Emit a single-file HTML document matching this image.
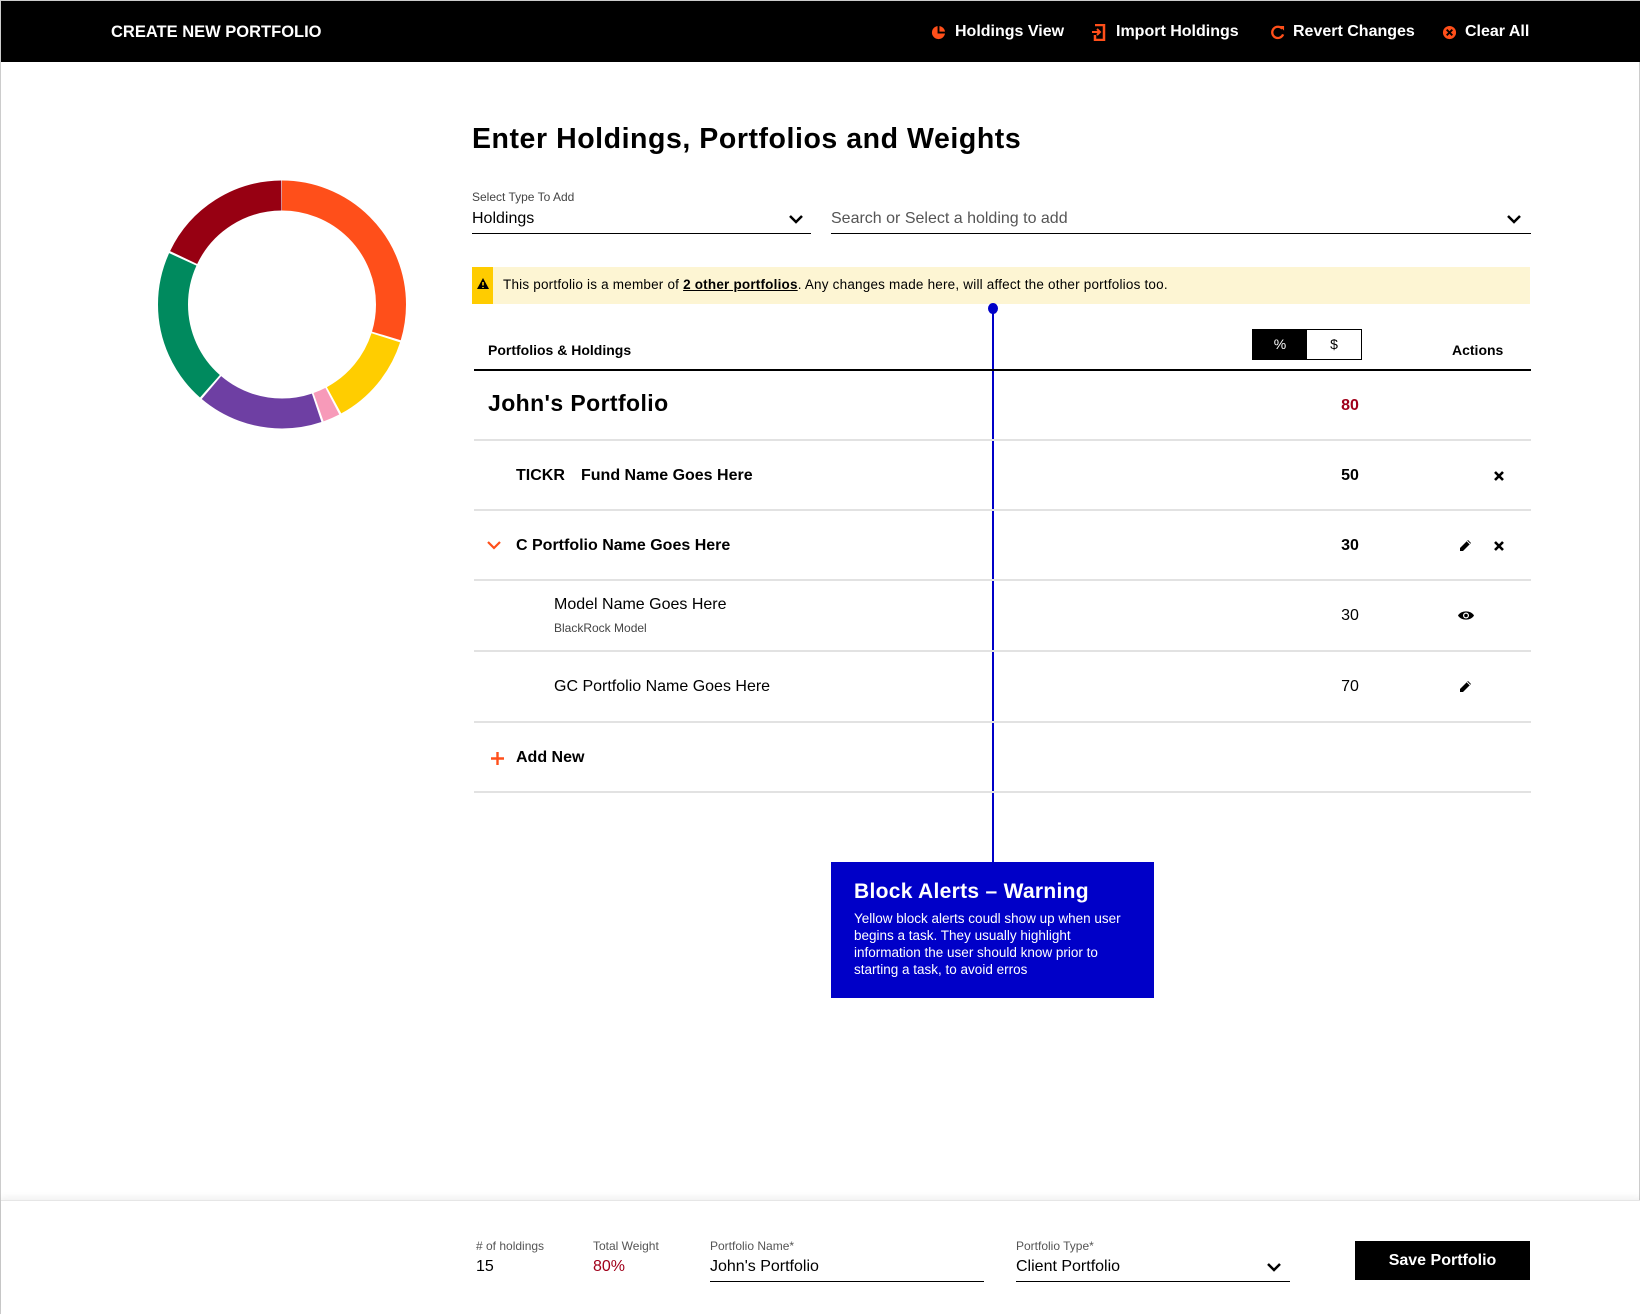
<!DOCTYPE html>
<html><head><meta charset="utf-8"><style>
*{margin:0;padding:0;box-sizing:border-box}
body{width:1640px;height:1314px;position:relative;background:#fff;font-family:"Liberation Sans",sans-serif;color:#000;overflow:hidden;border:1px solid #ccc}
.a{position:absolute;white-space:nowrap}
.hdr{position:absolute;left:0;top:0;width:1640px;height:61px;background:#000;color:#fff;font-weight:bold;font-size:16px}
.line{position:absolute;left:473px;width:1057px;height:2px;background:#e2e2e2}
.b{font-weight:bold}
.num{position:absolute;left:1309px;width:80px;text-align:center;font-size:16px}
</style></head><body>
<div class="hdr">
<div class="a" style="left:110px;top:22px;font-size:16.5px">CREATE NEW PORTFOLIO</div>
<svg class="a" style="left:930px;top:24px" width="15" height="15" viewBox="0 0 16 16"><circle cx="8" cy="8" r="7" fill="#ff4f1a"/><path d="M8 1v7h7" stroke="#000" stroke-width="2" fill="none"/></svg>
<div class="a" style="left:954px;top:22px">Holdings View</div>
<svg class="a" style="left:1091px;top:23px" width="15" height="17" viewBox="0 0 15 17"><path d="M3 1h9v15H3v-5" stroke="#ff4f1a" stroke-width="2.5" fill="none"/><path d="M0 8h7M5 5l3 3-3 3" stroke="#ff4f1a" stroke-width="2" fill="none"/></svg>
<div class="a" style="left:1115px;top:22px">Import Holdings</div>
<svg class="a" style="left:1269px;top:24px" width="15" height="15" viewBox="0 0 16 16"><path d="M13 4A6 6 0 1 0 14 10" stroke="#ff4f1a" stroke-width="2.5" fill="none"/><path d="M10 1h5v5z" fill="#ff4f1a"/></svg>
<div class="a" style="left:1292px;top:22px">Revert Changes</div>
<svg class="a" style="left:1441px;top:24px" width="15" height="15" viewBox="0 0 16 16"><circle cx="8" cy="8" r="7" fill="#ff4f1a"/><path d="M5 5l6 6M11 5l-6 6" stroke="#000" stroke-width="2"/></svg>
<div class="a" style="left:1464px;top:22px">Clear All</div>
</div>

<svg class="a" style="left:0;top:0" width="420" height="440">
<g transform="rotate(-90 281 303.5)" fill="none" stroke-width="30">
<circle cx="281" cy="303.5" r="109" stroke="#ff4f1a" stroke-dasharray="203 700" stroke-dashoffset="0"/>
<circle cx="281" cy="303.5" r="109" stroke="#ffcd00" stroke-dasharray="83 700" stroke-dashoffset="-205"/>
<circle cx="281" cy="303.5" r="109" stroke="#f79ab9" stroke-dasharray="15 700" stroke-dashoffset="-290"/>
<circle cx="281" cy="303.5" r="109" stroke="#6e3fa3" stroke-dasharray="112 700" stroke-dashoffset="-307"/>
<circle cx="281" cy="303.5" r="109" stroke="#008a5e" stroke-dasharray="139 700" stroke-dashoffset="-421"/>
<circle cx="281" cy="303.5" r="109" stroke="#970012" stroke-dasharray="122 700" stroke-dashoffset="-562"/>
</g></svg>

<div class="a b" style="left:471px;top:122px;font-size:28.5px;letter-spacing:0.55px">Enter Holdings, Portfolios and Weights</div>
<div class="a" style="left:471px;top:189px;font-size:12px;color:#444">Select Type To Add</div>
<div class="a" style="left:471px;top:209px;font-size:16px">Holdings</div>
<svg class="a" style="left:788px;top:213px" width="14" height="10"><path d="M1 2l6 6 6-6" stroke="#000" stroke-width="2.5" fill="none"/></svg>
<div class="a" style="left:471px;top:232px;width:339px;height:1px;background:#000"></div>
<div class="a" style="left:830px;top:209px;font-size:16px;color:#555">Search or Select a holding to add</div>
<svg class="a" style="left:1506px;top:213px" width="14" height="10"><path d="M1 2l6 6 6-6" stroke="#000" stroke-width="2.5" fill="none"/></svg>
<div class="a" style="left:830px;top:232px;width:700px;height:1px;background:#000"></div>

<div class="a" style="left:471px;top:266px;width:1058px;height:37px;background:#fdf5d3"></div>
<div class="a" style="left:471px;top:266px;width:21px;height:37px;background:#ffcc00"></div>
<svg class="a" style="left:475px;top:276px" width="14" height="13"><path d="M7 1L13 12H1z" fill="#000"/><path d="M7 5v3.5M7 10v1" stroke="#ffcc00" stroke-width="1.6"/></svg>
<div class="a" style="left:502px;top:276px;font-size:13.5px;letter-spacing:0.2px">This portfolio is a member of <b style="text-decoration:underline">2 other portfolios</b>. Any changes made here, will affect the other portfolios too.</div>

<div class="a" style="left:991px;top:307px;width:2px;height:555px;background:#0000c8"></div>
<div class="a" style="left:987px;top:302px;width:10px;height:11px;border-radius:50%;background:#0000c8"></div>
<div class="a" style="left:830px;top:861px;width:323px;height:136px;background:#0000c8;color:#fff;padding:18px 0 0 23px">
<div class="b" style="font-size:21px;margin-bottom:6px;letter-spacing:0.3px">Block Alerts – Warning</div>
<div style="font-size:13.5px;line-height:17px;white-space:normal;width:272px">Yellow block alerts coudl show up when user begins a task. They usually highlight information the user should know prior to starting a task, to avoid erros</div>
</div>

<div class="a b" style="left:487px;top:341px;font-size:14px">Portfolios &amp; Holdings</div>
<div class="a" style="left:1251px;top:328px;width:110px;height:31px;border:1px solid #000;font-size:14px">
<div class="a" style="left:0;top:0;width:54px;height:29px;background:#000;color:#fff;text-align:center;line-height:29px">%</div>
<div class="a" style="left:54px;top:0;width:54px;height:29px;text-align:center;line-height:29px">$</div></div>
<div class="a b" style="left:1451px;top:341px;font-size:14px">Actions</div>
<div class="a" style="left:473px;top:368px;width:1057px;height:2px;background:#000"></div>

<div class="a b" style="left:487px;top:389px;font-size:23px;letter-spacing:0.4px">John's Portfolio</div>
<div class="num b" style="top:396px;color:#a0001a">80</div>
<div class="line" style="top:438px"></div>

<div class="a b" style="left:515px;top:466px;font-size:16px">TICKR</div>
<div class="a b" style="left:580px;top:466px;font-size:16px">Fund Name Goes Here</div>
<div class="num b" style="top:466px">50</div>
<svg class="a" style="left:1492px;top:469px" width="12" height="12"><path d="M2 2l8 8M10 2l-8 8" stroke="#000" stroke-width="2.6"/></svg>
<div class="line" style="top:508px"></div>

<svg class="a" style="left:486px;top:539px" width="14" height="10"><path d="M1 2l6 6 6-6" stroke="#ff4f1a" stroke-width="2.2" fill="none"/></svg>
<div class="a b" style="left:515px;top:536px;font-size:16px">C Portfolio Name Goes Here</div>
<div class="num b" style="top:536px">30</div>
<svg class="a" style="left:1457px;top:537px" width="15" height="15" viewBox="0 0 15 15"><path d="M10 2l3 3-8 8H2v-3z" fill="#000"/><path d="M9 3l3 3" stroke="#fff" stroke-width="1"/></svg>
<svg class="a" style="left:1492px;top:539px" width="12" height="12"><path d="M2 2l8 8M10 2l-8 8" stroke="#000" stroke-width="2.6"/></svg>
<div class="line" style="top:578px"></div>

<div class="a" style="left:553px;top:595px;font-size:16px">Model Name Goes Here</div>
<div class="a" style="left:553px;top:620px;font-size:12px;color:#444">BlackRock Model</div>
<div class="num" style="top:606px">30</div>
<svg class="a" style="left:1457px;top:609px" width="16" height="11" viewBox="0 0 16 11"><path d="M0 5.5C3 0 13 0 16 5.5 13 11 3 11 0 5.5z" fill="#000"/><circle cx="8" cy="5.5" r="3" fill="#fff"/><circle cx="8" cy="5.5" r="1.8" fill="#000"/></svg>
<div class="line" style="top:649px"></div>

<div class="a" style="left:553px;top:677px;font-size:16px">GC Portfolio Name Goes Here</div>
<div class="num" style="top:677px">70</div>
<svg class="a" style="left:1457px;top:678px" width="15" height="15" viewBox="0 0 15 15"><path d="M10 2l3 3-8 8H2v-3z" fill="#000"/><path d="M9 3l3 3" stroke="#fff" stroke-width="1"/></svg>
<div class="line" style="top:720px"></div>

<svg class="a" style="left:489px;top:750px" width="15" height="15"><path d="M7.5 1v13M1 7.5h13" stroke="#ff4f1a" stroke-width="2.4"/></svg>
<div class="a b" style="left:515px;top:748px;font-size:16px">Add New</div>
<div class="line" style="top:790px"></div>

<div class="a" style="left:0;top:1199px;width:1640px;height:115px;background:#fff;box-shadow:0 -3px 6px rgba(0,0,0,0.06);border-top:1px solid #e6e6e6"></div>
<div class="a" style="left:475px;top:1238px;font-size:12px;color:#555">#&nbsp;of holdings</div>
<div class="a" style="left:475px;top:1257px;font-size:16px">15</div>
<div class="a" style="left:592px;top:1238px;font-size:12px;color:#555">Total Weight</div>
<div class="a" style="left:592px;top:1257px;font-size:16px;color:#a0001a">80%</div>
<div class="a" style="left:709px;top:1238px;font-size:12px;color:#555">Portfolio Name*</div>
<div class="a" style="left:709px;top:1257px;font-size:16px">John's Portfolio</div>
<div class="a" style="left:709px;top:1280px;width:274px;height:1px;background:#000"></div>
<div class="a" style="left:1015px;top:1238px;font-size:12px;color:#555">Portfolio Type*</div>
<div class="a" style="left:1015px;top:1257px;font-size:16px">Client Portfolio</div>
<svg class="a" style="left:1266px;top:1261px" width="14" height="10"><path d="M1 2l6 6 6-6" stroke="#000" stroke-width="2.5" fill="none"/></svg>
<div class="a" style="left:1015px;top:1280px;width:274px;height:1px;background:#000"></div>
<div class="a b" style="left:1354px;top:1240px;width:175px;height:39px;background:#000;color:#fff;font-size:16px;text-align:center;line-height:39px">Save Portfolio</div>
</body></html>
